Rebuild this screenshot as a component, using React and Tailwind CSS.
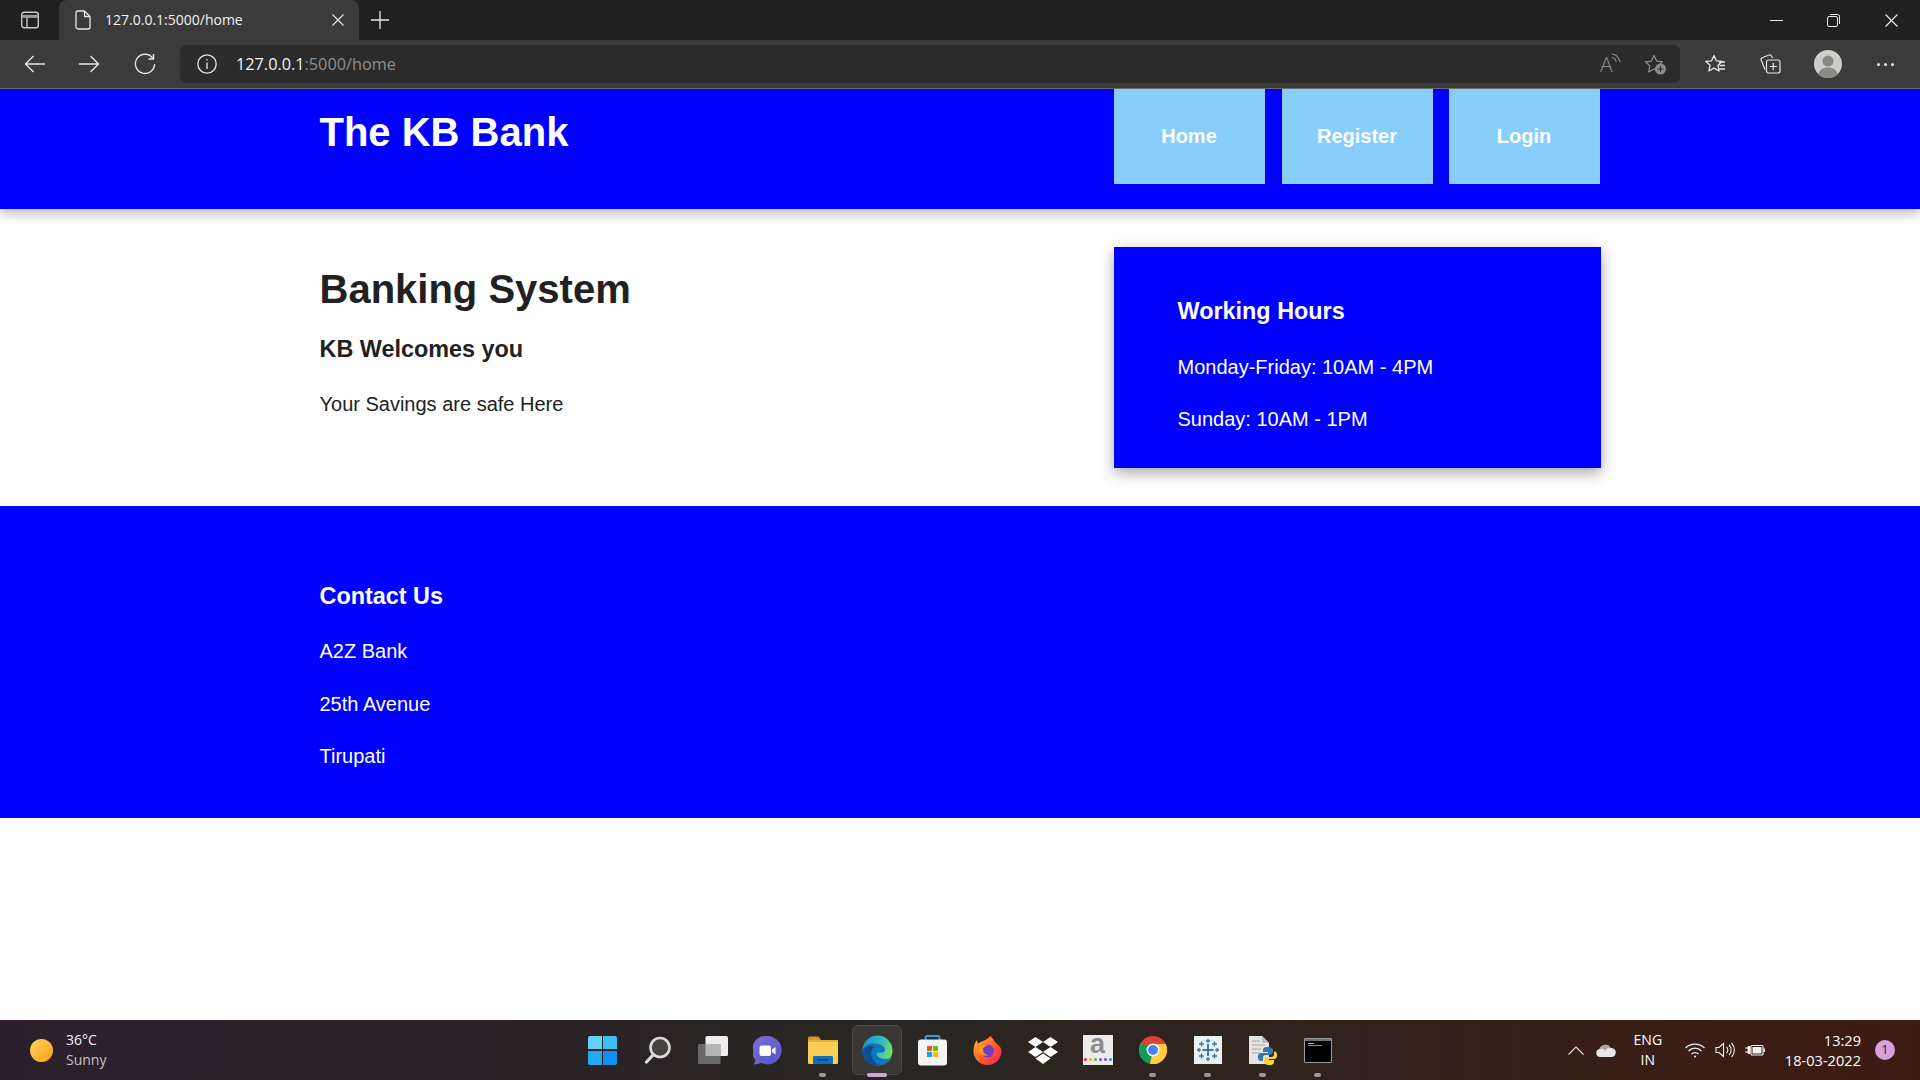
import React from 'react';

const UI = '"Open Sans", "Noto Sans", sans-serif';

const SidebarIcon = () => (
  <svg width="20" height="18" viewBox="0 0 20 18" fill="none" stroke="#c9c9c9" strokeWidth="1.4">
    <rect x="1.7" y="1.2" width="16.6" height="15.6" rx="2.5" />
    <path d="M2 5.4h16" strokeWidth="3" stroke="#9a9a9a" />
    <path d="M7 6.5v10" />
  </svg>
);

const FileIcon = () => (
  <svg width="16" height="20" viewBox="0 0 16 20" fill="none" stroke="#e8e8e8" strokeWidth="1.3" strokeLinejoin="round">
    <path d="M2.5 1h7l5.5 5.5V17a2 2 0 0 1-2 2H3a2 2 0 0 1-2-2V2.5A1.5 1.5 0 0 1 2.5 1z" />
    <path d="M9.5 1v5.5H15" />
  </svg>
);

const Close = ({ size = 12, color = '#e8e8e8' }) => (
  <svg width={size} height={size} viewBox="0 0 12 12" stroke={color} strokeWidth="1.1" fill="none">
    <path d="M.5.5l11 11M11.5.5l-11 11" />
  </svg>
);

const Plus = () => (
  <svg width="18" height="18" viewBox="0 0 18 18" stroke="#e8e8e8" strokeWidth="1.3" fill="none">
    <path d="M9 0v18M0 9h18" />
  </svg>
);

const ArrowLeft = ({ flip }) => (
  <svg width="21" height="18" viewBox="0 0 21 18" fill="none" stroke="#e6e6e6" strokeWidth="1.4" className={flip ? 'rotate-180' : ''}>
    <path d="M21 9H1.5M9.5 1L1.5 9l8 8" />
  </svg>
);

const Refresh = () => (
  <svg width="22" height="22" viewBox="0 0 22 22" fill="none" stroke="#e6e6e6" strokeWidth="1.4">
    <path d="M19 5.5A9.6 9.6 0 1 0 20.6 11" />
    <path d="M19.5 1v5h-5" />
  </svg>
);

const Info = () => (
  <svg width="20" height="20" viewBox="0 0 20 20" fill="none" stroke="#e6e6e6" strokeWidth="1.3">
    <circle cx="10" cy="10" r="9.2" />
    <path d="M10 8.5v6.5M10 5v1.6" />
  </svg>
);

const ReadAloud = () => (
  <div className="relative flex h-[20px] w-[20px] items-center">
    <span className="text-[21px] font-light leading-none text-[#8f8f8f]">A</span>
    <svg className="absolute right-[-2px] top-[-1px]" width="11" height="11" viewBox="0 0 11 11" fill="none" stroke="#8f8f8f" strokeWidth="1.1">
      <path d="M1 1c4 .5 7 3.5 8 8M1 4.5c2 .3 3.6 1.8 4.3 4" />
    </svg>
  </div>
);

const FavAdd = () => (
  <svg width="23" height="21" viewBox="0 0 23 21" fill="none">
    <path d="M10 1.5l2.6 5.6 6 .7-4.4 4.1 1.2 6-5.400-3-5.400 3 1.200-6L1.400 7.800l6-.7z" stroke="#8f8f8f" strokeWidth="1.2" strokeLinejoin="round" />
    <circle cx="16.5" cy="15" r="5.5" fill="#8f8f8f" />
    <path d="M16.5 12v6M13.5 15h6" stroke="#2b2b2b" strokeWidth="1.2" />
  </svg>
);

const Favorites = () => (
  <svg width="22" height="20" viewBox="0 0 22 20" fill="none" stroke="#e6e6e6" strokeWidth="1.3" strokeLinejoin="round">
    <path d="M10 1.5l2.4 5.3 5.800.6-4.300 3.900 1.200 5.700L10 14.100l-5.100 2.900 1.200-5.700L1.800 7.400l5.800-.6z" fill="#3b3b3b" />
    <path d="M15 8h6M15.5 11.5h5.500M15 15h6" />
  </svg>
);

const Collections = () => (
  <svg width="21" height="20" viewBox="0 0 21 20" fill="none" stroke="#e6e6e6" strokeWidth="1.2">
    <path d="M5 15.5L1.200 6.300a2 2 0 0 1 1-2.500l6.800-2.800a2 2 0 0 1 2.500 1L12.500 4" />
    <rect x="6.5" y="6" width="13.5" height="13" rx="2" fill="#3b3b3b" />
    <path d="M13.200 9v7M9.800 12.500h7" />
  </svg>
);

const Avatar = () => (
  <svg width="28" height="28" viewBox="0 0 28 28">
    <circle cx="14" cy="14" r="14" fill="#cfcdc9" />
    <circle cx="14" cy="11" r="5.5" fill="#8a8885" />
    <path d="M4 24c2-5 6-6.500 10-6.500S22 19 24 24a14 14 0 0 1-20 0z" fill="#8a8885" />
  </svg>
);

const WinControls = () => (
  <div className="flex h-full items-center">
    <div className="flex w-[57px] justify-center">
      <div className="h-px w-[13px] bg-[#e8e8e8]" />
    </div>
    <div className="flex w-[57px] justify-center">
      <svg width="13" height="13" viewBox="0 0 13 13" fill="none" stroke="#e8e8e8" strokeWidth="1">
        <rect x=".5" y="2.5" width="10" height="10" rx="1.5" />
        <path d="M3 .5h7.500a2 2 0 0 1 2 2V10" />
      </svg>
    </div>
    <div className="flex w-[58px] justify-center">
      <Close size={13} />
    </div>
  </div>
);

const BrowserChrome = () => (
  <div className="h-[89px] shrink-0" style={{ fontFamily: UI }}>
    <div className="flex h-[40px] items-end justify-between bg-[#202020]">
      <div className="flex h-full items-center">
        <div className="flex w-[59px] justify-center">
          <SidebarIcon />
        </div>
        <div className="flex h-full w-[300px] items-center rounded-t-lg bg-[#3b3b3b] pl-[16px] pr-[15px]">
          <FileIcon />
          <span className="ml-[14px] flex-1 pb-[2px] text-[14px] text-[#f2f2f2]">127.0.0.1:5000/home</span>
          <Close />
        </div>
        <div className="ml-[12px]">
          <Plus />
        </div>
      </div>
      <WinControls />
    </div>
    <div className="flex h-[49px] items-center border-b border-[#6b6b6b] bg-[#3b3b3b]">
      <div className="flex w-[180px] items-center pl-[7px]">
        <div className="flex w-[55px] justify-center"><ArrowLeft /></div>
        <div className="flex w-[55px] justify-center"><ArrowLeft flip /></div>
        <div className="flex w-[55px] justify-center"><Refresh /></div>
      </div>
      <div className="flex h-[38px] w-[1500px] items-center rounded-md bg-[#2b2b2b] pl-[17px]">
        <Info />
        <span className="ml-[19px] flex-1 text-[16.25px] text-[#f2f2f2]">
          127.0.0.1<span className="text-[#8f8f8f]">:5000/home</span>
        </span>
        <ReadAloud />
        <div className="ml-[24px] mr-[13px]"><FavAdd /></div>
      </div>
      <div className="flex flex-1 items-center">
        <div className="ml-[24px]"><Favorites /></div>
        <div className="ml-[34px]"><Collections /></div>
        <div className="ml-[33px]"><Avatar /></div>
        <div className="ml-[35px] flex gap-[4px]">
          <span className="h-[3px] w-[3px] rounded-full bg-[#e6e6e6]" />
          <span className="h-[3px] w-[3px] rounded-full bg-[#e6e6e6]" />
          <span className="h-[3px] w-[3px] rounded-full bg-[#e6e6e6]" />
        </div>
      </div>
    </div>
  </div>
);

const NavButton = ({ children }) => (
  <a className="flex h-[95px] w-[151px] items-center justify-center bg-[#87cefa] pb-[2px] text-[20px] font-bold text-white">{children}</a>
);

const Header = () => (
  <header className="relative z-10 h-[120px] bg-[#0000ff] shadow-[0_4px_12px_rgba(0,0,0,0.3)]">
    <div className="mx-auto flex w-[1281px] justify-between">
      <h1 className="pt-[20px] text-[40px] font-bold leading-[46px] text-white">The KB Bank</h1>
      <nav className="mr-[1px] flex">
        <NavButton>Home</NavButton>
        <div className="w-[17px]" />
        <NavButton>Register</NavButton>
        <div className="w-[16px]" />
        <NavButton>Login</NavButton>
      </nav>
    </div>
  </header>
);

const Main = () => (
  <main className="h-[297px] bg-white">
    <div className="mx-auto flex w-[1281px] justify-between pt-[38px]">
      <div className="text-[#212121]">
        <h2 className="pt-[18px] text-[40px] font-bold leading-[48px]">Banking System</h2>
        <h3 className="mt-[22px] text-[23.4px] font-bold leading-[28px]">KB Welcomes you</h3>
        <p className="mt-[28px] text-[20px] leading-[26px]">Your Savings are safe Here</p>
      </div>
      <aside className="h-[221px] w-[487px] bg-[#0000ff] pl-[64px] pt-[50px] text-white shadow-[0_5px_14px_rgba(0,0,0,0.35)]">
        <h3 className="text-[23.4px] font-bold leading-[28px]">Working Hours</h3>
        <p className="mt-[29px] text-[20px] leading-[26px]">Monday-Friday: 10AM - 4PM</p>
        <p className="mt-[26px] text-[20px] leading-[26px]">Sunday: 10AM - 1PM</p>
      </aside>
    </div>
  </main>
);

const Footer = () => (
  <footer className="h-[312px] bg-[#0000ff] text-white">
    <div className="mx-auto w-[1281px] pt-[76px]">
      <h3 className="text-[23.4px] font-bold leading-[28px]">Contact Us</h3>
      <p className="mt-[28px] text-[20px] leading-[26px]">A2Z Bank</p>
      <p className="mt-[27px] text-[20px] leading-[26px]">25th Avenue</p>
      <p className="mt-[26px] text-[20px] leading-[26px]">Tirupati</p>
    </div>
  </footer>
);

const WinLogo = () => (
  <div className="grid h-[29px] w-[29px] grid-cols-2 gap-[1.5px]">
    <span className="rounded-tl-[2px] bg-[#63d2f9]" />
    <span className="rounded-tr-[2px] bg-[#3dc0f8]" />
    <span className="rounded-bl-[2px] bg-[#25a9f5]" />
    <span className="rounded-br-[2px] bg-[#118ef0]" />
  </div>
);

const SearchIcon = () => (
  <svg width="28" height="29" viewBox="0 0 28 29" fill="none">
    <circle cx="16" cy="11.5" r="9.5" fill="#45423f" stroke="#dcdcdc" strokeWidth="2.6" />
    <path d="M9 19l-6.500 7" stroke="#dcdcdc" strokeWidth="3.2" strokeLinecap="round" />
  </svg>
);

const TaskView = () => (
  <svg width="30" height="28" viewBox="0 0 30 28">
    <rect x="7.5" y="0" width="22.5" height="20" rx="1.5" fill="#ededed" />
    <rect x="0" y="8" width="22.5" height="20" rx="1.5" fill="#6f6f6f" fillOpacity=".92" />
    <rect x="7.5" y="8" width="15" height="12" fill="#b5b5b5" />
  </svg>
);

const TeamsChat = () => (
  <svg width="29" height="29" viewBox="0 0 29 29">
    <defs>
      <linearGradient id="chatGrad" x1="0" y1="0" x2="1" y2="1">
        <stop offset="0" stopColor="#7f6fd6" />
        <stop offset="1" stopColor="#4f56c6" />
      </linearGradient>
    </defs>
    <path d="M14.5 0a14.200 14.200 0 1 1-6 27.100C6 28 3 28.500.5 28.500c1.200-1.500 1.800-3.300 1.700-5A14.400 14.400 0 0 1 14.500 0z" fill="url(#chatGrad)" />
    <rect x="6.5" y="9.5" width="11.5" height="10.5" rx="2" fill="#fff" />
    <path d="M19 13.5l3.500-2.500v7.500L19 16z" fill="#fff" />
  </svg>
);

const Folder = () => (
  <svg width="30" height="28" viewBox="0 0 30 28">
    <path d="M0 2a1.500 1.500 0 0 1 1.500-1.500h9L13 4H0z" fill="#d6991d" />
    <rect x="0" y="4" width="30" height="24" rx="1" fill="#f8cf52" />
    <rect x="0" y="4" width="30" height="2" fill="#e2b137" />
    <rect x="5" y="20" width="20" height="8" rx="1" fill="#0f6fb8" />
    <rect x="10" y="23" width="10" height="1.5" fill="#0a3d6b" />
  </svg>
);

const EdgeIcon = () => (
  <svg width="31" height="31" viewBox="0 0 31 31">
    <defs>
      <linearGradient id="edgeTop" x1="0" y1="0.2" x2="1" y2="0.6">
        <stop offset="0" stopColor="#1b8fd8" />
        <stop offset=".55" stopColor="#2cc0c0" />
        <stop offset="1" stopColor="#78e060" />
      </linearGradient>
    </defs>
    <circle cx="15.5" cy="15.5" r="15" fill="url(#edgeTop)" />
    <path d="M.5 16C2 9.500 8 8.500 12 8.500c5.500 0 10 2 11 6 .4 2-1.500 3-4 3-2 0-4-.5-4.500.5-.5 3 4 6 8.500 6 3 0 5.500-.8 7-2-2 5.500-8 8.500-14.500 8.500C7 30.500.5 24 .5 16z" fill="#1272bd" />
    <path d="M.5 16c1-3.500 5-5 8-5 1.500 0 3 .4 4 1-2.500 1.500-3.500 3.500-3.500 6 0 5 4 10.500 9 12-.8.300-1.700.5-3 .5C7 30.500.5 24 .5 16z" fill="#0b4f91" />
  </svg>
);

const StoreIcon = () => (
  <svg width="29" height="31" viewBox="0 0 29 31">
    <path d="M7.5 6V2.500A1.500 1.500 0 0 1 9 1h11a1.500 1.500 0 0 1 1.500 1.500V6" fill="none" stroke="#1fa6e8" strokeWidth="1.8" />
    <rect x="0" y="4.5" width="29" height="26" rx="3" fill="#f4f4f4" />
    <rect x="9" y="11" width="5" height="5" fill="#f25022" />
    <rect x="15" y="11" width="5" height="5" fill="#7fba00" />
    <rect x="9" y="17" width="5" height="5" fill="#00a4ef" />
    <rect x="15" y="17" width="5" height="5" fill="#ffb900" />
  </svg>
);

const FirefoxIcon = () => (
  <svg width="29" height="29" viewBox="0 0 29 29">
    <defs>
      <linearGradient id="foxGrad" x1="0" y1="0" x2="1" y2="1">
        <stop offset="0" stopColor="#ffbd2e" />
        <stop offset=".55" stopColor="#ff5a2b" />
        <stop offset="1" stopColor="#e81e76" />
      </linearGradient>
    </defs>
    <path d="M17 0c4 3 4 5 6 7 3.500 3 5.500 5 5.500 8a14 14 0 1 1-28 0C.5 10 2 6 4 4c0 2 .5 3 1.500 3.500C8 4.500 14 5 17 0z" fill="url(#foxGrad)" />
    <circle cx="14.5" cy="15" r="6.5" fill="#6d3fc4" />
    <path d="M4 12c2-3 8-4 11-2-3 0-5 1-5 4 0 3 3 5 6 5-4 2-11 0-12-7z" fill="#ff9a24" />
  </svg>
);

const Dropbox = () => (
  <svg width="30" height="27" viewBox="0 0 30 27" fill="#fff">
    <path d="M7.500 0L15 5l-7.500 5L0 5zM22.500 0L30 5l-7.500 5L15 5zM0 15l7.500-5L15 15l-7.500 5zM22.500 10L30 15l-7.500 5L15 15zM7.500 21.500l7.500-5 7.500 5L15 27z" />
  </svg>
);

const AmazonTile = () => (
  <div className="flex h-[30px] w-[30px] flex-col items-center bg-[#ececec]">
    <span className="mt-[-3px] text-[27px] font-bold leading-[25px] text-[#8d8d8d]" style={{ fontFamily: '"Liberation Sans", sans-serif' }}>a</span>
    <div className="mt-[1px] flex gap-[2px]">
      <span className="h-[3px] w-[3px] rounded-full bg-[#ee1c25]" />
      <span className="h-[3px] w-[3px] rounded-full bg-[#f9a11b]" />
      <span className="h-[3px] w-[3px] rounded-full bg-[#4cb748]" />
      <span className="h-[3px] w-[3px] rounded-full bg-[#8a3fd1]" />
      <span className="h-[3px] w-[3px] rounded-full bg-[#7b3fe4]" />
      <span className="h-[3px] w-[3px] rounded-full bg-[#1e90ff]" />
    </div>
  </div>
);

const ChromeIcon = () => (
  <svg width="28" height="28" viewBox="0 0 28 28">
    <circle cx="14" cy="14" r="14" fill="#db4437" />
    <path d="M14 14L1.800 7A14 14 0 0 0 11 27.700z" fill="#0f9d58" />
    <path d="M14 8h12.700A14 14 0 0 1 11 27.700L14 14z" fill="#ffcd40" />
    <circle cx="14" cy="14" r="6.5" fill="#fff" />
    <circle cx="14" cy="14" r="5" fill="#4285f4" />
  </svg>
);

const TableauTile = () => (
  <div className="flex h-[28px] w-[28px] items-center justify-center bg-[#ebf0f3]">
    <svg width="24" height="24" viewBox="0 0 24 24" fill="none" stroke="#3d7da8" strokeWidth="1.4">
      <path d="M12 6v12M6.500 12h11" strokeWidth="2" />
      <path d="M12 1v4M10 3h4M12 19v4M10 21h4M1 12h4M3 10v4M19 12h4M21 10v4M5.500 3.500v5M3 6h5M18.500 3.500v5M16 6h5M5.500 15.500v5M3 18h5M18.500 15.500v5M16 18h5" />
    </svg>
  </div>
);

const PythonFile = () => (
  <svg width="29" height="30" viewBox="0 0 29 30">
    <path d="M1 1h13l7 7v21H1z" fill="#e4e4e4" />
    <path d="M14 1v7h7z" fill="#bdbdbd" />
    <path d="M4 6h8M4 10h13M4 14h9M4 18h8" stroke="#a8a8a8" strokeWidth="1" />
    <path d="M20 12c-4 0-5 1-5 3v2h5v1h-7c-2 0-3 1.500-3 4s1 4 3 4h2v-3c0-2 1-3 3-3h4c1.500 0 3-1 3-3v-2c0-2-2-3-5-3z" fill="#3776ab" />
    <path d="M21 30c4 0 5-1 5-3v-2h-5v-1h5c2 0 3-1.500 3-4s-1-3.500-2-3.500h-1v2.500c0 2-1 3-3 3h-4c-1.500 0-3 1-3 3v2c0 2 2 3 5 3z" fill="#ffd43b" />
  </svg>
);

const Terminal = () => (
  <div className="h-[25px] w-[28px] rounded-[1px] border border-[#9a9a9a] bg-black shadow-[inset_0_2px_0_#6f7478]">
    <div className="ml-[3px] mt-[4px] h-[1px] w-[6px] bg-[#bdbdbd]" />
    <div className="ml-[3px] mt-[1px] h-[1px] w-[14px] bg-[#8d8d8d]" />
  </div>
);

const dockIcons = [
  { key: 'start', icon: <WinLogo /> },
  { key: 'search', icon: <SearchIcon /> },
  { key: 'view', icon: <TaskView /> },
  { key: 'chat', icon: <TeamsChat /> },
  { key: 'files', icon: <Folder />, dot: true },
  { key: 'edge', icon: <EdgeIcon />, active: true },
  { key: 'store', icon: <StoreIcon /> },
  { key: 'firefox', icon: <FirefoxIcon /> },
  { key: 'dropbox', icon: <Dropbox /> },
  { key: 'amazon', icon: <AmazonTile /> },
  { key: 'chrome', icon: <ChromeIcon />, dot: true },
  { key: 'tableau', icon: <TableauTile />, dot: true },
  { key: 'python', icon: <PythonFile />, dot: true },
  { key: 'terminal', icon: <Terminal />, dot: true },
];

const DockItem = ({ item }) => (
  <div className="relative flex h-[60px] w-[55px] items-center justify-center">
    {item.active && <div className="absolute left-[2px] top-[5px] h-[50px] w-[50px] rounded-md border border-[#4a4744] bg-[#3a3733]" />}
    <div className="relative">{item.icon}</div>
    {item.dot && <div className="absolute bottom-[3px] left-[24px] h-[4px] w-[7px] rounded-full bg-[#9a9a9a]" />}
    {item.active && <div className="absolute bottom-[3px] left-[17px] h-[4px] w-[20px] rounded-full bg-[#d9a0e0]" />}
  </div>
);

const TrayIcons = () => (
  <>
    <svg width="16" height="9" viewBox="0 0 16 9" fill="none" stroke="#e6e6e6" strokeWidth="1.1">
      <path d="M.5 8.500L8 1l7.500 7.500" />
    </svg>
    <svg className="ml-[12px]" width="20" height="13" viewBox="0 0 20 13">
      <path d="M4 13a4 4 0 0 1-.5-7.900A6 6 0 0 1 14.500 4 4.500 4.500 0 0 1 16 13z" fill="#e8e8e8" />
      <path d="M3.500 5.100A6 6 0 0 1 14.500 4 5 5 0 0 0 9 7a4 4 0 0 0-5.500-1.900z" fill="#a9a5a3" />
    </svg>
    <div className="ml-[17px] w-[30px] text-center text-[14px] leading-[20px] text-white">ENG<br />IN</div>
    <svg className="ml-[22px]" width="20" height="15" viewBox="0 0 20 15" fill="none" stroke="#f0f0f0" strokeWidth="1.2">
      <path d="M.5 5a13.500 13.500 0 0 1 19 0M3.500 8a9 9 0 0 1 13 0M6.500 11a5 5 0 0 1 7 0" />
      <circle cx="10" cy="13.5" r="1" fill="#f0f0f0" stroke="none" />
    </svg>
    <svg className="ml-[10px]" width="20" height="16" viewBox="0 0 20 16" fill="none" stroke="#f0f0f0" strokeWidth="1.1">
      <path d="M1 5.500h3L8.500 1.500v13L4 10.500H1z" />
      <path d="M11.500 5a4 4 0 0 1 0 6M14 3a7 7 0 0 1 0 10M16.500 1a10 10 0 0 1 0 14" />
    </svg>
    <svg className="ml-[10px]" width="20" height="14" viewBox="0 0 20 14">
      <path d="M0 5h3M0 9h3M3 3.500h2v7H3z" stroke="#f0f0f0" strokeWidth="1" fill="#f0f0f0" />
      <rect x="6" y="2.5" width="12" height="9.5" rx="1" fill="none" stroke="#f0f0f0" strokeWidth="1.1" />
      <rect x="7.5" y="4" width="9" height="6.5" fill="#f0f0f0" />
      <rect x="18.5" y="5.5" width="1.5" height="3.5" fill="#f0f0f0" />
    </svg>
  </>
);

const Taskbar = () => (
  <div
    className="grid h-[60px] shrink-0 grid-cols-[1fr_770px_1fr] bg-gradient-to-r from-[#2c1f2b] via-[#292622] to-[#3e1a12]"
    style={{ fontFamily: UI }}
  >
    <div className="flex items-center pl-[30px]">
      <div className="h-[23px] w-[23px] rounded-full bg-gradient-to-br from-[#ffd65c] to-[#f79c0c]" />
      <div className="ml-[13px] text-[14px] leading-[20px]">
        <div className="text-[#f2f2f2]">36°C</div>
        <div className="text-[#c4c0c4]">Sunny</div>
      </div>
    </div>
    <div className="flex">
      {dockIcons.map((item) => <DockItem key={item.key} item={item} />)}
    </div>
    <div className="flex items-center justify-end pr-[25px]">
      <TrayIcons />
      <div className="ml-[20px] text-right text-[14.6px] leading-[20px] text-white">
        <div>13:29</div>
        <div>18-03-2022</div>
      </div>
      <div className="ml-[14px] flex h-[20px] w-[20px] items-center justify-center rounded-full bg-[#d9a0e0] text-[12px] text-[#1e1a1e]">1</div>
    </div>
  </div>
);

export default function App() {
  return (
    <div className="flex h-screen flex-col overflow-hidden bg-white" style={{ fontFamily: '"Liberation Sans", Arial, sans-serif' }}>
      <BrowserChrome />
      <div className="flex-1 overflow-hidden">
        <Header />
        <Main />
        <Footer />
      </div>
      <Taskbar />
    </div>
  );
}
